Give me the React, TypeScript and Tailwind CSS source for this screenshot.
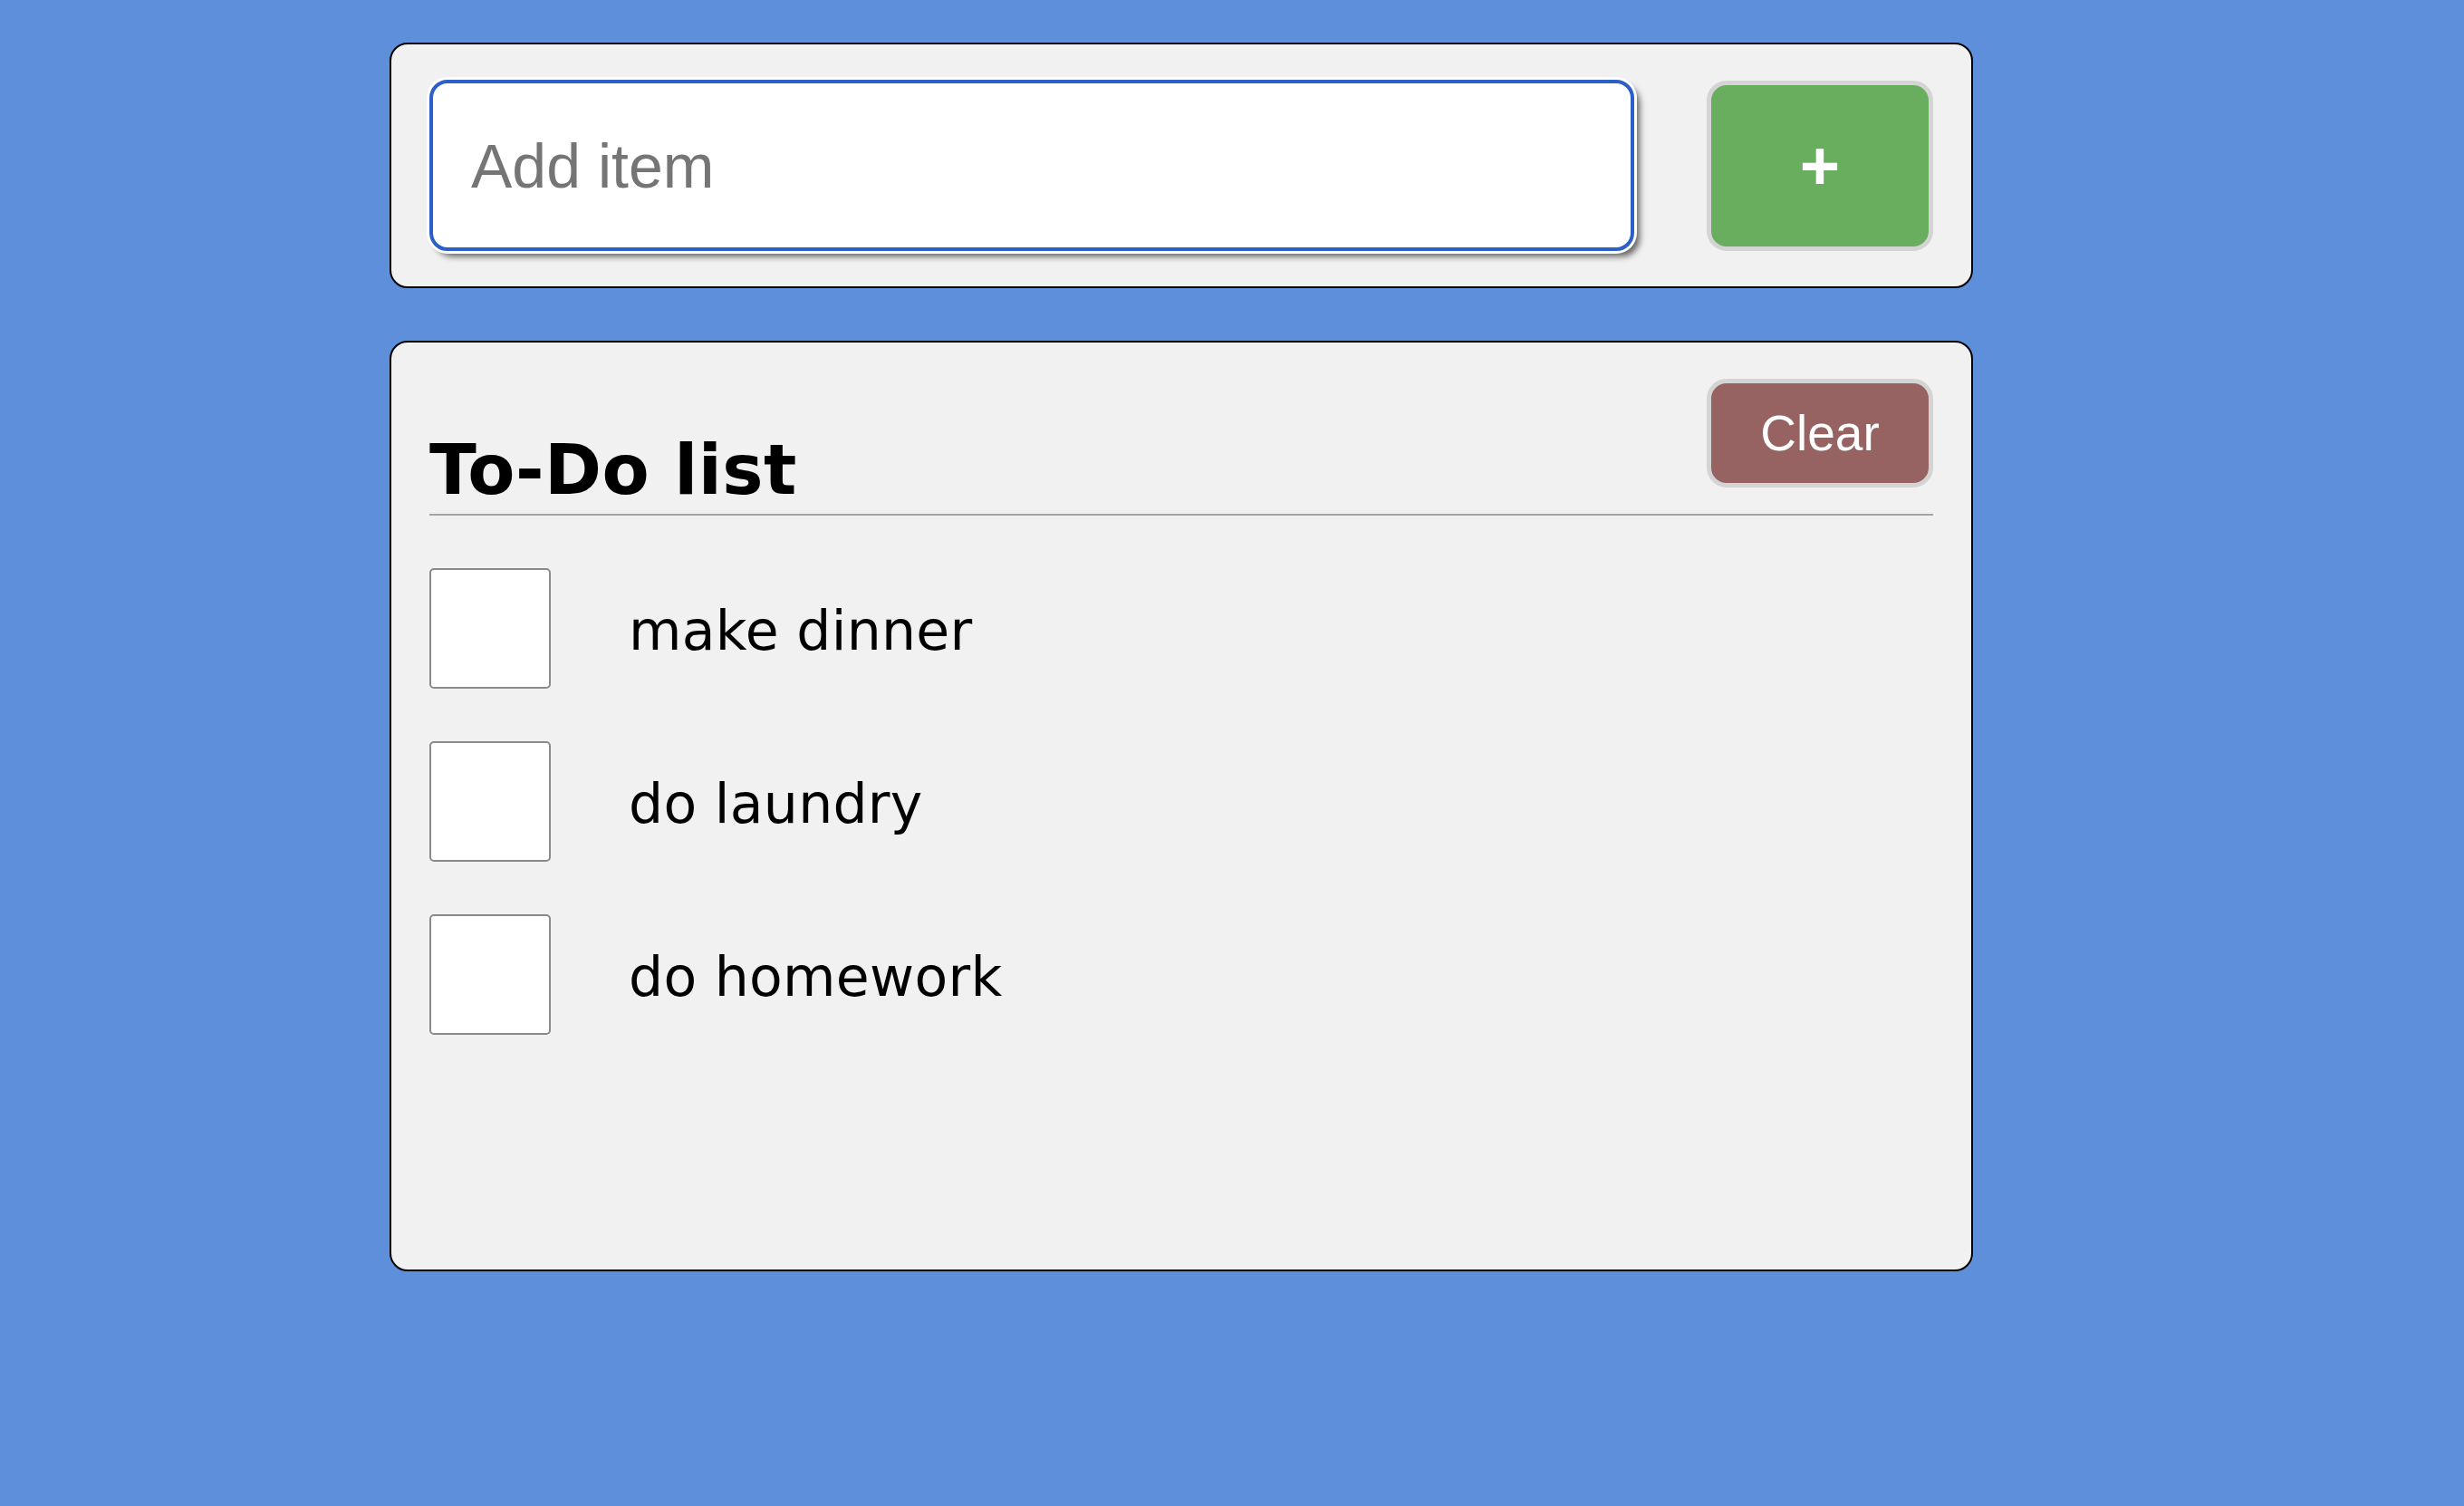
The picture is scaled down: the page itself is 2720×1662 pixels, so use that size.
import React, { useState } from "react";

const initialItems = ["make dinner", "do laundry", "do homework"];

const TodoRow = ({ label }: { label: string }) => {
  return (
    <div className="flex items-center">
      <input
        type="checkbox"
        className="appearance-none w-[134px] h-[133px] bg-white border-2 border-[#8a8a8a] rounded-[5px] shrink-0"
      />
      <span className="ml-[86px] pt-[4px] text-[60px] tracking-[0.3px] text-black font-['DejaVu_Sans',sans-serif]">
        {label}
      </span>
    </div>
  );
};

export default function App() {
  const [items, setItems] = useState<string[]>(initialItems);
  const [text, setText] = useState("");

  const addItem = () => {
    if (!text.trim()) return;
    setItems([...items, text.trim()]);
    setText("");
  };

  return (
    <div className="min-h-screen w-full bg-[#5e8fda] pt-[47px] font-['Liberation_Sans',Arial,sans-serif]">
      {/* add item card */}
      <div className="ml-[430px] w-[1748px] bg-[#f1f1f1] border-2 border-black rounded-[20px] px-[42px] py-[39px]">
        <div className="flex items-center justify-between">
          <input
            value={text}
            onChange={(e) => setText(e.target.value)}
            placeholder="Add item"
            className="w-[1330px] h-[189px] bg-white border-4 border-[#2d5fc8] rounded-[20px] pl-[42px] text-[68px] text-black placeholder:text-[#757575] outline-none shadow-[0_0_0_3px_white,6px_6px_7px_rgba(0,0,0,0.6)]"
          />
          <button
            onClick={addItem}
            className="w-[250px] h-[188px] bg-[#69ad5e] border-[5px] border-[#d4d4d4] rounded-[22px] text-white text-[76px] font-bold leading-none flex items-center justify-center"
          >
            +
          </button>
        </div>
      </div>

      {/* list card */}
      <div className="ml-[430px] mt-[58px] w-[1748px] h-[1027px] bg-[#f1f1f1] border-2 border-black rounded-[20px] px-[42px] pt-[40px]">
        <div className="flex items-start justify-between border-b-2 border-[#a3a3a3] pb-[10px]">
          <h2 className="mt-[63px] text-[76px] leading-none font-bold tracking-[0.5px] text-black font-['DejaVu_Sans',sans-serif]">
            To-Do list
          </h2>
          <button
            onClick={() => setItems([])}
            className="w-[250px] h-[120px] bg-[#966262] border-[5px] border-[#d4d4d4] rounded-[22px] text-white text-[55px] leading-none flex items-center justify-center"
          >
            Clear
          </button>
        </div>
        <div className="mt-[58px] flex flex-col gap-[58px]">
          {items.map((item) => (
            <TodoRow key={item} label={item} />
          ))}
        </div>
      </div>
    </div>
  );
}
